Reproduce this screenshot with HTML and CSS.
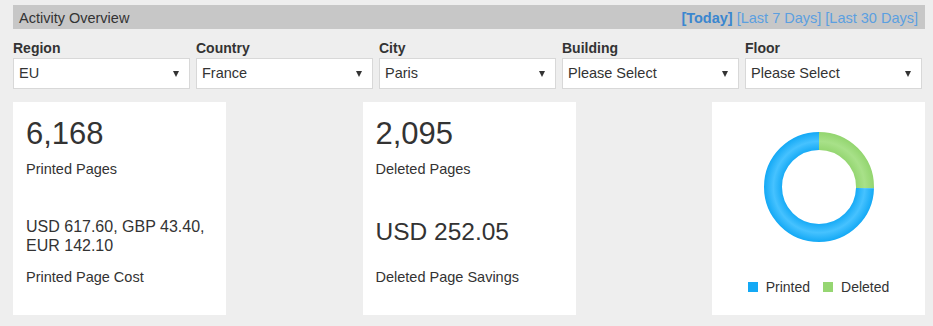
FILE: index.html
```html
<!DOCTYPE html>
<html lang="en">

<head>
    <meta charset="UTF-8">
    <meta name="viewport" content="width=device-width, initial-scale=1.0">
    <title>Activity Overview</title>
    <link rel="stylesheet" href="styles.css">
</head>

<body>

    <div class="page">
        <div class="title-bar">
            <span class="title">Activity Overview</span>
            <span class="ranges">
                <a class="range active">[Today]</a>
                <a class="range">[Last 7 Days]</a>
                <a class="range">[Last 30 Days]</a>
            </span>
        </div>

        <div class="filters">
            <div class="field">
                <label>Region</label>
                <div class="select"><span>EU</span><span class="caret"></span></div>
            </div>
            <div class="field">
                <label>Country</label>
                <div class="select"><span>France</span><span class="caret"></span></div>
            </div>
            <div class="field">
                <label>City</label>
                <div class="select"><span>Paris</span><span class="caret"></span></div>
            </div>
            <div class="field">
                <label>Building</label>
                <div class="select"><span>Please Select</span><span class="caret"></span></div>
            </div>
            <div class="field">
                <label>Floor</label>
                <div class="select"><span>Please Select</span><span class="caret"></span></div>
            </div>
        </div>

        <div class="cards">
            <div class="card">
                <div class="stat-number">6,168</div>
                <div class="stat-label">Printed Pages</div>
                <div class="stat-value">USD 617.60, GBP 43.40,<br>EUR 142.10</div>
                <div class="stat-label">Printed Page Cost</div>
            </div>

            <div class="card">
                <div class="stat-number">2,095</div>
                <div class="stat-label">Deleted Pages</div>
                <div class="stat-value large">USD 252.05</div>
                <div class="stat-label">Deleted Page Savings</div>
            </div>

            <div class="card chart-card">
                <svg class="donut" width="110" height="110" viewBox="0 0 110 110">
                    <defs>
                        <radialGradient id="blueRing" cx="55" cy="55" r="55" gradientUnits="userSpaceOnUse">
                            <stop offset="0.66" stop-color="#14a9f5" />
                            <stop offset="0.83" stop-color="#46c2ff" />
                            <stop offset="1" stop-color="#14a9f5" />
                        </radialGradient>
                        <radialGradient id="greenRing" cx="55" cy="55" r="55" gradientUnits="userSpaceOnUse">
                            <stop offset="0.66" stop-color="#93d56f" />
                            <stop offset="0.83" stop-color="#a8e189" />
                            <stop offset="1" stop-color="#93d56f" />
                        </radialGradient>
                    </defs>
                    <g transform="rotate(-90 55 55)">
                        <circle cx="55" cy="55" r="46" fill="none" stroke="url(#greenRing)" stroke-width="18"
                            stroke-dasharray="73.27 289.03" />
                        <circle cx="55" cy="55" r="46" fill="none" stroke="url(#blueRing)" stroke-width="18"
                            stroke-dasharray="215.76 289.03" stroke-dashoffset="-73.27" />
                    </g>
                </svg>
                <div class="legend">
                    <span class="swatch printed"></span><span class="legend-text">Printed</span>
                    <span class="swatch deleted"></span><span class="legend-text">Deleted</span>
                </div>
            </div>
        </div>
    </div>

</body>

</html>
```

FILE: styles.css
```css
body {
    font-family: 'Liberation Sans', Arial, sans-serif;
    margin: 0;
    padding: 0;
    background-color: #eeeeee;
    color: #333;
}

.page {
    padding: 5px 8px 0 13px;
}

.title-bar {
    display: flex;
    justify-content: space-between;
    height: 24px;
    padding: 3px 7px 0 6px;
    box-sizing: border-box;
    line-height: 21px;
    font-size: 14.5px;
    background-color: #c7c7c7;
}

.ranges {
    display: flex;
    gap: 4px;
}

.range {
    color: #5b9fe0;
    cursor: pointer;
}

.range.active {
    color: #3a86cf;
    font-weight: bold;
}

.filters {
    display: flex;
    gap: 6px;
    margin: 11px 3px 0 0;
}

.field {
    flex: 1;
}

.field label {
    display: block;
    font-size: 14px;
    font-weight: bold;
    line-height: 16px;
    margin-bottom: 2px;
}

.select {
    display: flex;
    align-items: center;
    justify-content: space-between;
    height: 31px;
    padding: 0 10px 0 5px;
    box-sizing: border-box;
    font-size: 14.5px;
    line-height: 29px;
    background-color: #fff;
    border: 1px solid #d8d8d8;
}

.caret {
    width: 0;
    height: 0;
    border-left: 3.5px solid transparent;
    border-right: 3.5px solid transparent;
    border-top: 6px solid #333;
}

.cards {
    display: flex;
    justify-content: space-between;
    margin-top: 13px;
}

.card {
    width: 213px;
    height: 213px;
    padding: 14px 13px 0;
    box-sizing: border-box;
    background-color: #fff;
}

.stat-number {
    font-size: 31px;
    line-height: 36px;
}

.stat-label {
    font-size: 14.5px;
    line-height: 18px;
    margin-top: 8px;
}

.stat-value {
    height: 38px;
    margin-top: 39px;
    margin-bottom: 13px;
    font-size: 16px;
    line-height: 19px;
}

.stat-value.large {
    font-size: 24.5px;
    line-height: 29px;
}

.chart-card {
    display: flex;
    flex-direction: column;
    align-items: center;
    padding-top: 30px;
}

.legend {
    display: flex;
    align-items: center;
    margin-top: 37px;
    font-size: 14px;
    line-height: 16px;
}

.swatch {
    width: 10px;
    height: 10px;
    margin-right: 8px;
}

.swatch.printed {
    background-color: #14a9f5;
}

.swatch.deleted {
    background-color: #96d672;
    margin-left: 13px;
}
```
